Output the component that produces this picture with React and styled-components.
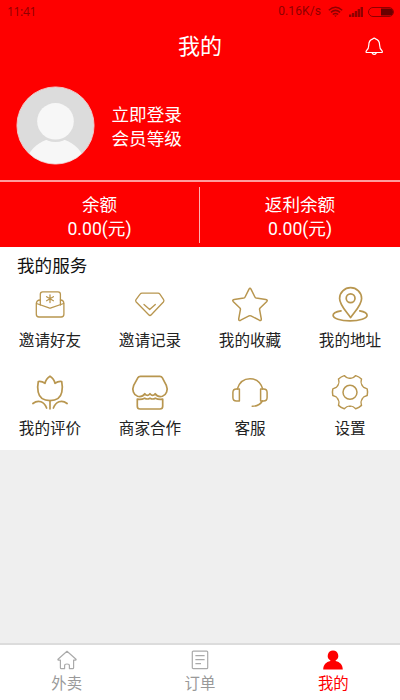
import React from "react";
import styled, { createGlobalStyle } from "styled-components";

const GlobalStyle = createGlobalStyle`
  * {
    box-sizing: border-box;
  }

  body {
    margin: 0;
    background: #efefef;
    font-family: Roboto, "Noto Sans CJK SC", sans-serif;
  }
`;

const Screen = styled.div`
  display: flex;
  flex-direction: column;
  width: 400px;
  height: 700px;
  overflow: hidden;
  background: #efefef;
`;

const Header = styled.header`
  background: #fe0000;
  color: #fff;
`;

const StatusBar = styled.div`
  display: flex;
  align-items: center;
  height: 23px;
  padding: 0 6px 0 7px;
  color: #8f0000;
  font-size: 12px;
  line-height: 23px;
`;

const Clock = styled.span`
  flex: 1;
  font-size: 12px;
  line-height: 22px;
  letter-spacing: -0.3px;
  font-family: "Open Sans", sans-serif;
`;

const Speed = styled.span`
  margin-right: 7px;
  letter-spacing: 0.1px;
`;

const StatusIcon = styled.svg`
  display: block;
  margin-right: ${props => props.$gap || 0}px;
`;

const TitleBar = styled.div`
  display: grid;
  grid-template-columns: 1fr auto 1fr;
  align-items: center;
  height: 46px;
  padding: 0 16px;
`;

const Title = styled.h1`
  grid-column: 2;
  margin: 0;
  padding-top: 2px;
  font-size: 22px;
  font-weight: 400;
  line-height: 32px;
`;

const Bell = styled.svg`
  justify-self: end;
`;

const Profile = styled.div`
  display: flex;
  align-items: center;
  height: 111px;
  padding: 2px 16px 0;
`;

const Avatar = styled.svg`
  display: block;
  margin-right: 16.5px;
`;

const ProfileText = styled.div`
  font-size: 17.6px;
  line-height: 24px;
  padding-top: 2px;
`;

const Balances = styled.div`
  display: flex;
  height: 67px;
  padding: 5px 0 4px;
  border-top: 2px solid #ff9d9d;
`;

const Balance = styled.div`
  width: 50%;
  padding-top: 6px;
  text-align: center;
  font-size: 17.6px;
  line-height: 24px;

  &:first-child {
    border-right: 1px solid #ffb0b0;
  }
`;

const Services = styled.section`
  height: 203px;
  background: #fff;
  color: #222;
`;

const ServicesTitle = styled.h2`
  margin: 0;
  padding: 6px 17px 0;
  height: 39px;
  color: #111;
  font-size: 17.6px;
  font-weight: 400;
  line-height: 26px;
`;

const ServiceGrid = styled.div`
  display: grid;
  grid-template-columns: repeat(4, 1fr);
  grid-auto-rows: 88px;
`;

const Service = styled.div`
  display: flex;
  flex-direction: column;
  align-items: center;
  font-size: 15.6px;
  line-height: 24px;
`;

const ServiceIcon = styled.svg`
  display: block;
  margin-bottom: 7px;
  overflow: visible;
  fill: none;
  stroke: #b8964f;
  stroke-width: ${props => props.$weight || 1.5};
  stroke-linecap: round;
  stroke-linejoin: round;
`;

const TabBar = styled.nav`
  display: flex;
  height: 57px;
  margin-top: auto;
  background: #fff;
  border-top: 2px solid #dcdcdc;
`;

const Tab = styled.div`
  flex: 1;
  display: flex;
  flex-direction: column;
  align-items: center;
  padding-top: 5px;
  color: ${props => (props.$active ? "#fe0000" : "#999")};
  font-size: 15.4px;
  line-height: 24px;
`;

const TabIcon = styled.svg`
  display: block;
  margin-bottom: 2px;
  fill: none;
  stroke: #aaa;
  stroke-width: 1.2;
  stroke-linejoin: round;
`;

// six teeth, every valley is a shallow curve between two of them
const point = (deg, r) => {
  const a = (deg * Math.PI) / 180;
  return `${(18 + r * Math.cos(a)).toFixed(2)} ${(18.2 + r * Math.sin(a)).toFixed(2)}`;
};

const gearPath = [0, 60, 120, 180, 240, 300]
  .map(
    (t, i) =>
      `${i === 0 ? "M" : "L"}${point(t - 11, 17.5)} Q${point(t, 18)} ${point(t + 11, 17.5)} ` +
      `C${point(t + 19, 13.8)} ${point(t + 21, 14)} ${point(t + 30, 14)} ` +
      `C${point(t + 39, 14)} ${point(t + 41, 13.8)} ${point(t + 49, 17.5)}`
  )
  .join(" ") + "Z";

const services = [
  {
    label: "邀请好友",
    weight: 1.3,
    icon: (
      <>
        <path d="M8.3 19V8.2Q8.3 5.8 10.7 5.8H26Q28.4 5.8 28.4 8.2V19" />
        <path d="M8.3 14Q4.3 14 4.3 18V28.3Q4.3 31 7 31H29.2Q31.9 31 31.9 28.3V18Q31.9 14 28.4 14" />
        <path d="M4.5 17.5L17 21.8Q18 22.3 19 21.8L31.7 17.5" />
        <path d="M18 8.8V16.6M14.6 10.7L21.4 14.7M21.4 10.7L14.6 14.7" />
      </>
    )
  },
  {
    label: "邀请记录",
    weight: 1.3,
    icon: (
      <>
        <path d="M10 7.2H26Q27.2 7.2 27.9 8.2L31.6 13.6Q32.4 14.8 31.4 16L19.3 28.8Q18 30.2 16.7 28.8L4.2 16Q3.2 14.8 4 13.6L8.1 8.2Q8.8 7.2 10 7.2Z" />
        <path d="M12 18.5L17.7 23.6L23.3 18.5" />
      </>
    )
  },
  {
    label: "我的收藏",
    icon: (
      <path d="M16.9 3.3Q18 1.3 19.1 3.3L22.9 11Q23.3 11.8 24.2 12L33.8 13.4Q36.2 14 34.6 15.7L28.1 22Q27.4 22.8 27.6 23.6L29.3 32.8Q29.5 35.2 27.3 34.2L19 29.9Q18 29.4 17 29.9L8.7 34.2Q6.5 35.2 6.7 32.8L8.4 23.6Q8.6 22.8 7.9 22L1.4 15.7Q-0.2 14 2.2 13.4L11.8 12Q12.7 11.8 13.1 11Z" />
    )
  },
  {
    label: "我的地址",
    weight: 1.7,
    icon: (
      <>
        <path d="M18.6 31.6C15.5 26.5 7.6 19.5 7.6 12.4A11 10.7 0 0 1 29.6 12.4C29.6 19.5 21.7 26.5 18.6 31.6Z" />
        <circle cx="18.6" cy="12.3" r="4.4" />
        <path d="M9 24.8C4 25.6 1.1 27.2 1.1 29.3C1.1 32.4 8.4 34.8 18 34.8S35.1 32.4 35.1 29.3C35.1 27.2 32.6 25.6 27.8 24.8" />
      </>
    )
  },
  {
    label: "我的评价",
    weight: 1.7,
    icon: (
      <>
        <path d="M6.3 7.5C5.4 11.5 5.5 14.6 6.2 18.2C7.3 23.7 11.6 26.7 18 26.7S28.7 23.7 29.8 18.2C30.5 14.6 30.6 11.5 29.7 7.5C27 7 25.1 7.8 23 9.3C22.3 6 20.7 3.8 18 2.2C15.3 3.8 13.7 6 13 9.3C10.9 7.8 9 7 6.3 7.5Z" />
        <path d="M18 26.7V34.8" />
        <path d="M0.9 29.5C6.5 25.2 12.2 27.8 14.6 34" />
        <path d="M35.1 29.5C29.5 25.2 23.8 27.8 21.4 34" />
      </>
    )
  },
  {
    label: "商家合作",
    weight: 1.7,
    icon: (
      <>
        <path d="M8.4 2.3H27.9Q29.6 2.3 30.4 3.8L34.3 11.4C36.2 15.8 34.6 20.8 30.4 22.2C27.5 23 24.8 22 23.2 19.7Q20.7 23 18 19.7Q15.3 23 12.8 19.7C11.2 22 8.5 23 5.6 22.2C1.4 20.8 -0.2 15.8 1.7 11.4L5.8 3.8Q6.7 2.3 8.4 2.3Z" />
        <path d="M5.3 25.2V32.3Q5.3 35 8 35H28Q30.7 35 30.7 32.3V25.2Q26.5 25.8 23.3 24.2Q20.7 25.8 18 24.2Q15.3 25.8 12.7 24.2Q9.5 25.8 5.3 25.2Z" />
      </>
    )
  },
  {
    label: "客服",
    icon: (
      <>
        <path d="M5.3 15C7.2 8.8 12 4.8 18 4.8S28.8 8.8 30.7 15" />
        <path d="M4.4 14.9H7.4V27H4.4Q0.9 27 0.9 23.5V18.4Q0.9 14.9 4.4 14.9Z" />
        <path d="M31.6 14.9H28.6V27H31.6Q35.1 27 35.1 23.5V18.4Q35.1 14.9 31.6 14.9Z" />
        <path d="M30.4 27Q27.5 32 20.2 32.3" />
      </>
    )
  },
  {
    label: "设置",
    icon: (
      <>
        <path d={gearPath} />
        <circle cx="18" cy="18.3" r="7" />
      </>
    )
  }
];

function App() {
  return (
    <React.Fragment>
      <GlobalStyle />
      <Screen>
        <Header>
          <StatusBar>
            <Clock>11:41</Clock>
            <Speed>0.16K/s</Speed>
            <StatusIcon $gap={6} width="15" height="12" viewBox="0 0 15 12" fill="none" stroke="currentColor" strokeWidth="1.5">
              <path d="M0.8 4.2Q7.5 -1.8 14.2 4.2" />
              <path d="M2.9 6.4Q7.5 2.4 12.1 6.4" />
              <path d="M4.8 8.5Q7.5 6.3 10.2 8.5" />
              <path d="M6.2 9.5H8.8L7.5 11Z" fill="currentColor" stroke="none" />
            </StatusIcon>
            <StatusIcon $gap={5} width="14" height="10" viewBox="0 0 14 10" fill="currentColor">
              <path d="M0 7.5h2.3V10H0zM2.9 6h2.3v4H2.9zM5.8 4h2.3v6H5.8zM8.7 2H11v8H8.7zM11.6 0H14v10h-2.4z" />
            </StatusIcon>
            <StatusIcon width="26" height="10" viewBox="0 0 26 10">
              <rect x="0.5" y="0.5" width="25" height="9" rx="4.5" fill="none" stroke="currentColor" />
              <path d="M13 1.5H21.5A3.5 3.5 0 0 1 21.5 8.5H13Z" fill="#6a0000" />
            </StatusIcon>
          </StatusBar>

          <TitleBar>
            <Title>我的</Title>
            <Bell width="20" height="20" viewBox="0 0 20 20" fill="none" stroke="#fff" strokeWidth="1.2" strokeLinejoin="round">
              <path d="M8.9 2.9Q10.2 1.4 11.5 2.9C14.4 3.8 15.6 6 15.6 9C15.6 12 16.3 13.4 18 14.7Q19 16.5 17.4 16.5H3Q1.4 16.5 2.4 14.7C4.1 13.4 4.8 12 4.8 9C4.8 6 6 3.8 8.9 2.9Z" />
              <path d="M8 16.8Q10.2 20 12.4 16.8" />
            </Bell>
          </TitleBar>

          <Profile>
            <Avatar width="79" height="79" viewBox="0 0 79 79">
              <defs>
                <clipPath id="avatar">
                  <circle cx="39.5" cy="39.5" r="38.5" />
                </clipPath>
              </defs>
              <circle cx="39.5" cy="39.5" r="38.5" fill="#dcdcdc" />
              <g clipPath="url(#avatar)">
                <path d="M8 79C12 66 20 57.5 30 54H49C59 57.5 67 66 71 79Z" fill="#f7f7f7" />
                <circle cx="39.5" cy="35.8" r="20.3" fill="#dcdcdc" />
                <circle cx="39.5" cy="35.3" r="18.3" fill="#f7f7f7" />
              </g>
              <circle cx="39.5" cy="39.5" r="38.6" fill="none" stroke="#f3dcdc" strokeWidth="0.8" />
            </Avatar>
            <ProfileText>
              <div>立即登录</div>
              <div>会员等级</div>
            </ProfileText>
          </Profile>

          <Balances>
            <Balance>
              <div>余额</div>
              <div>0.00(元)</div>
            </Balance>
            <Balance>
              <div>返利余额</div>
              <div>0.00(元)</div>
            </Balance>
          </Balances>
        </Header>

        <Services>
          <ServicesTitle>我的服务</ServicesTitle>
          <ServiceGrid>
            {services.map(item => (
              <Service key={item.label}>
                <ServiceIcon $weight={item.weight} width="36" height="36" viewBox="0 0 36 36">
                  {item.icon}
                </ServiceIcon>
                {item.label}
              </Service>
            ))}
          </ServiceGrid>
        </Services>

        <TabBar>
          <Tab>
            <TabIcon width="20" height="20" viewBox="0 0 20 20">
              <path d="M10 1.3L1 9.3Q0.6 10.2 1.6 10.2H3.4V17.7Q3.4 18.6 4.3 18.6H7.6V15.6Q7.6 14 10 14T12.4 15.6V18.6H15.7Q16.6 18.6 16.6 17.7V10.2H18.4Q19.4 10.2 19 9.3Z" />
            </TabIcon>
            外卖
          </Tab>
          <Tab>
            <TabIcon width="20" height="20" viewBox="0 0 20 20">
              <rect x="2.3" y="1.1" width="15.4" height="17.6" rx="1" />
              <path d="M5.4 5.6H14.6M5.4 9.6H14.6M5.4 13.6H11" />
            </TabIcon>
            订单
          </Tab>
          <Tab $active>
            <TabIcon width="20" height="20" viewBox="0 0 20 20">
              <path
                d="M10 0.6A5.3 5.3 0 0 1 12.6 10.5V11C17 12 19.6 14.8 19.8 19.4H0.2C0.4 14.8 3 12 7.4 11V10.5A5.3 5.3 0 0 1 10 0.6Z"
                fill="#fe0000"
                stroke="none"
              />
            </TabIcon>
            我的
          </Tab>
        </TabBar>
      </Screen>
    </React.Fragment>
  );
}

export default App;
